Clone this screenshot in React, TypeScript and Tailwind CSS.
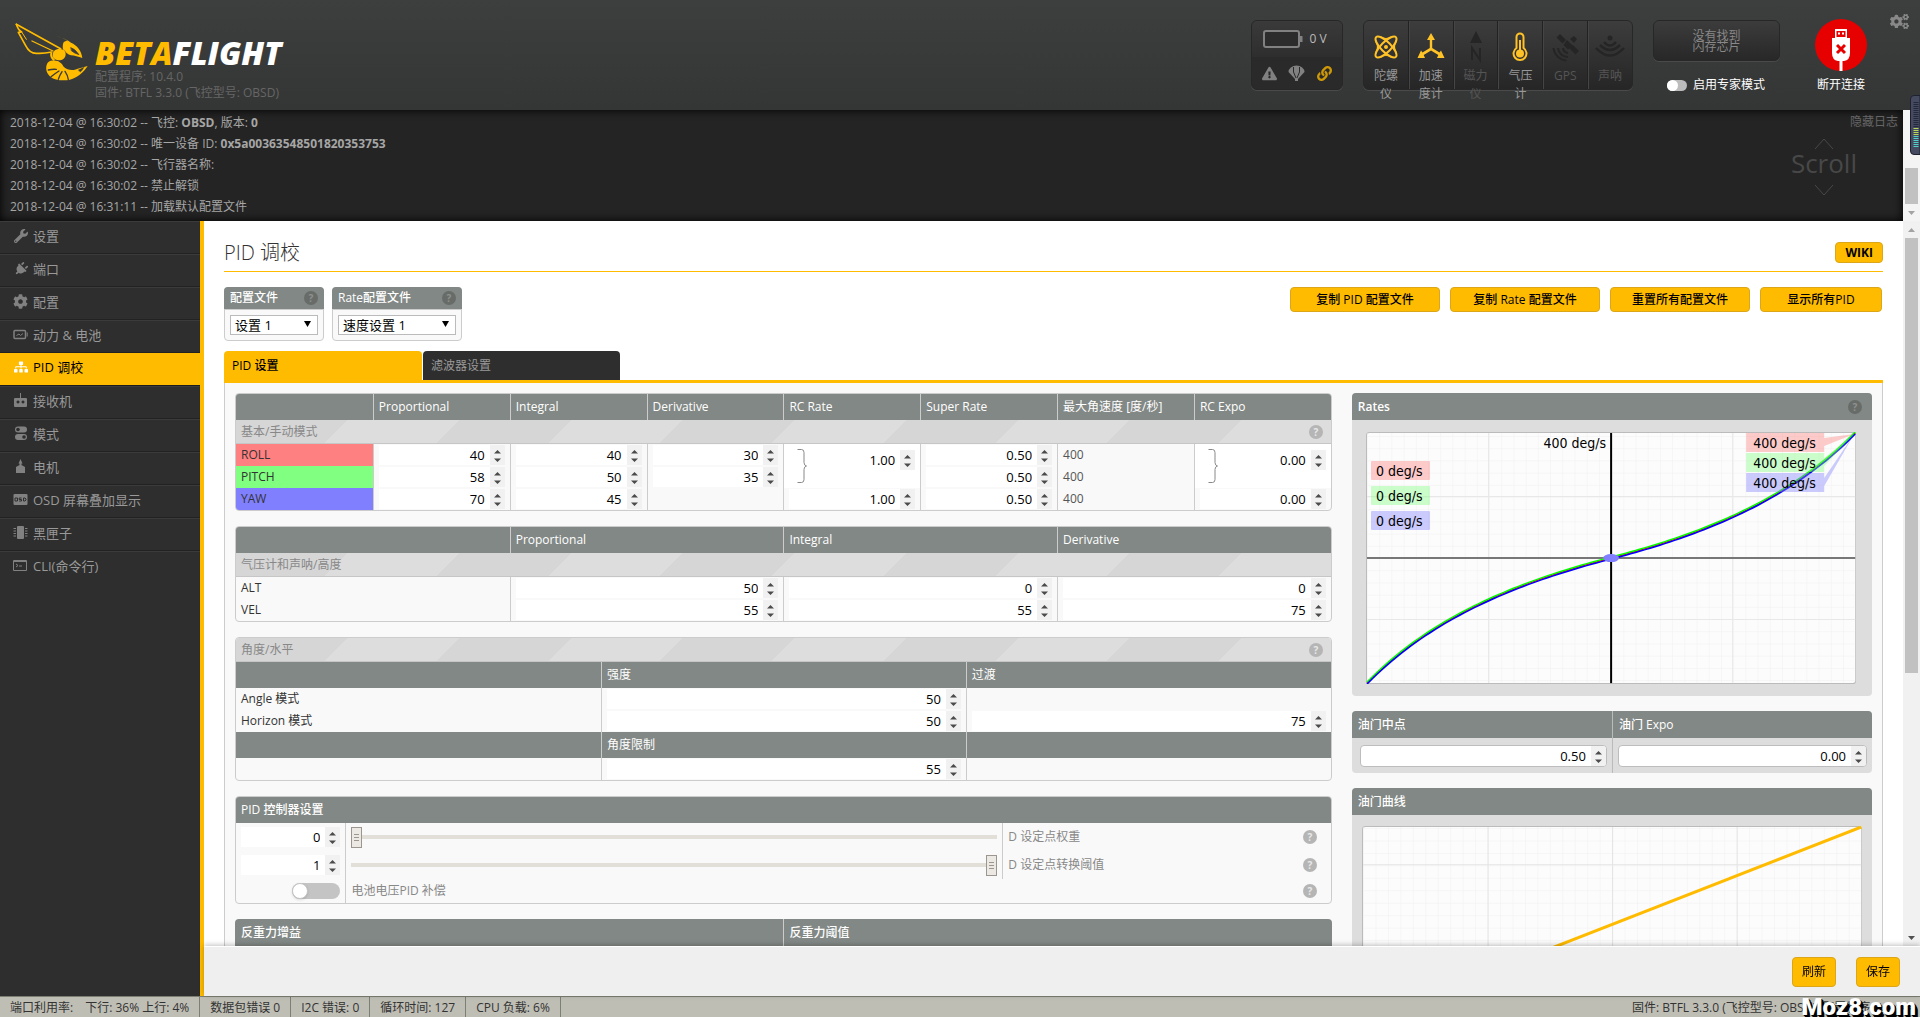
import type { ReactNode } from "react";
import { FaCog, FaCogs, FaExclamationTriangle, FaLink, FaPlug, FaSitemap, FaWrench } from "react-icons/fa";

type SpinnerProps = {
  label: string;
  value: string;
  framed?: boolean;
};

function Spinner({ label, value, framed = false }: SpinnerProps) {
  return (
    <span
      className={
        framed
          ? "flex h-[22px] w-full overflow-hidden rounded-sm border border-[#bdbdbd] bg-white"
          : "flex h-5 w-full bg-white"
      }
    >
      <input
        type="number"
        aria-label={label}
        defaultValue={value}
        step="any"
        className="min-w-0 flex-1 appearance-none bg-transparent pr-[5px] text-right text-[13px] leading-5 text-black outline-none [&::-webkit-inner-spin-button]:appearance-none"
      />
      <svg width="15" height="20" viewBox="0 0 15 20" className="shrink-0 bg-[#f1f1f1]" aria-hidden="true">
        <path d="M4 8.5 L7.5 5 L11 8.5Z M4 13.5 L7.5 17 L11 13.5Z" fill="#4b4b4b" />
      </svg>
    </span>
  );
}

function Help({ dark = false }: { dark?: boolean }) {
  return (
    <span
      className={
        dark
          ? "flex size-3.5 shrink-0 items-center justify-center rounded-full bg-[#686c69] text-[10px] font-bold text-[#8d918e]"
          : "flex size-3.5 shrink-0 items-center justify-center rounded-full bg-[#b5b5b5] text-[10px] font-bold text-[#e8e8e8]"
      }
    >
      ?
    </span>
  );
}

function Switch({ id, small = false }: { id: string; small?: boolean }) {
  return (
    <input
      id={id}
      type="checkbox"
      role="switch"
      className={
        small
          ? "h-[11px] w-5 appearance-none rounded-full bg-[#bcbcbc] before:block before:size-[11px] before:rounded-full before:bg-white"
          : "block h-4 w-12 appearance-none rounded-full bg-[#c4c4c4] before:block before:size-4 before:rounded-full before:border before:border-[#c4c4c4] before:bg-white before:shadow"
      }
    />
  );
}

function Box({ children }: { children: ReactNode }) {
  return <div className="mb-[15px] overflow-hidden rounded border border-[#ccc]">{children}</div>;
}

const tableClass = "w-full table-fixed border-separate border-spacing-0 text-left";
const stripes =
  "h-6 border-b border-[#c6c6c6] bg-[repeating-linear-gradient(135deg,#d6d6d6_0_79px,#dddddd_79px_158px)] px-[5px] font-normal text-[#888]";

function HeadRow({ titles }: { titles: string[] }) {
  return (
    <tr className="bg-[#828885] text-white">
      {titles.map((title, i) => (
        <th
          key={i}
          className={i === 0 ? "h-[26px] px-[5px] font-normal" : "h-[26px] border-l border-[#ccc] px-[5px] font-normal"}
        >
          {title}
        </th>
      ))}
    </tr>
  );
}

function StripeRow({ title, span, help = false }: { title: string; span: number; help?: boolean }) {
  return (
    <tr>
      <th colSpan={span} className={stripes}>
        <span className="flex items-center justify-between pr-[3px]">
          {title}
          {help && <Help />}
        </span>
      </th>
    </tr>
  );
}

const inputCell = "h-[22px] border-l border-[#ccc] px-[5px] py-0";

function ValueCell({ label, value }: { label: string; value: string | null }) {
  return <td className={inputCell}>{value !== null && <Spinner label={label} value={value} />}</td>;
}

function BracketCell({ label, value }: { label: string; value: string }) {
  return (
    <td rowSpan={2} className="border-l border-[#ccc] bg-white px-[5px] py-0">
      <div className="flex items-center pl-2">
        <svg width="10" height="34" viewBox="0 0 10 34" fill="none" stroke="#888" className="shrink-0" aria-hidden="true">
          <path d="M0.5 0.5h4q2.5 0 2.5 3v10q0 3 2.5 3.5q-2.5 0.5 -2.5 3.5v10q0 3 -2.5 3h-4" />
        </svg>
        <div className="min-w-0 flex-1 pb-3">
          <Spinner label={label} value={value} />
        </div>
      </div>
    </td>
  );
}

function Hornet() {
  return (
    <svg width="73" height="58" viewBox="46 69 219 174" aria-hidden="true">
      <g fill="none" stroke="#ffbb00" strokeLinejoin="round" strokeLinecap="round">
        <path d="M50 73 L183 146" strokeWidth="5" />
        <path d="M50 73 C54 86 58 92 66 96 L56 97 C62 108 70 122 78 137 C86 153 98 161 112 160 C128 161 142 159 156 156" strokeWidth="5" />
        <path d="M66 96 L80 118" strokeWidth="3" />
        <path d="M97 123 L160 153" strokeWidth="4" />
      </g>
      <g fill="#ffbb00">
        <path d="M168 108 C190 113 204 121 214 128 C232 136 246 152 248 174 C236 170 224 167 214 166 C204 162 198 158 196 152 C190 152 188 144 190 132 C192 124 198 122 204 124 C196 116 184 112 168 108Z" />
        <path d="M164 152 C170 146 184 146 192 150 C200 156 200 170 192 176 C182 184 166 182 160 172 C158 164 159 157 164 152Z" />
        <path d="M152 158 C150 168 153 176 162 183 L166 179 C158 172 156 166 158 157Z" />
        <path d="M160 182 C176 180 186 190 192 200 C204 212 222 212 234 206 L264 198 C252 216 234 234 208 240 C186 243 164 240 152 230 C140 220 136 204 143 190 C148 183 154 181 160 182Z" />
      </g>
      <g fill="none" stroke="#393b3a" strokeLinecap="round">
        <path d="M146 210 Q158 207 170 208" strokeWidth="4" />
        <path d="M154 230 Q164 222 178 213" strokeWidth="4" />
        <path d="M176 238 Q180 226 187 215" strokeWidth="4" />
        <path d="M206 239 Q204 225 196 214" strokeWidth="4" />
        <path d="M214 143 Q226 146 238 164 Q224 160 216 153 Z" fill="#393b3a" strokeWidth="2" />
        <path d="M236 210 L253 202 Q248 212 242 216Z" fill="#393b3a" strokeWidth="1" />
      </g>
    </svg>
  );
}

const sensors: { label: string; on: boolean; icon: ReactNode }[] = [
  {
    label: "陀螺仪",
    on: true,
    icon: (
      <g fill="none" stroke="currentColor" strokeWidth="2">
        <ellipse cx="15" cy="16" rx="14" ry="5" transform="rotate(45 15 16)" />
        <ellipse cx="15" cy="16" rx="14" ry="5" transform="rotate(-45 15 16)" />
        <circle cx="15" cy="16" r="2" fill="currentColor" stroke="none" />
        <path d="M10 6 Q15 9 20 6 M10 26 Q15 23 20 26 M5 11 Q8 16 5 21 M25 11 Q22 16 25 21" strokeWidth="1.2" />
      </g>
    ),
  },
  {
    label: "加速度计",
    on: true,
    icon: (
      <g fill="currentColor">
        <path d="M15 2 L19 9 H16.200 V17 L23.500 21.500 L25 19.500 L28.500 27 L21 27 L22.300 24 L15 19.500 L7.700 24 L9 27 L1.500 27 L5 19.500 L6.500 21.500 L13.800 17 V9 H11Z" />
      </g>
    ),
  },
  {
    label: "磁力仪",
    on: false,
    icon: (
      <g fill="none" stroke="currentColor" strokeWidth="2">
        <path d="M15 0 L21 12 H9Z" fill="currentColor" stroke="none" />
        <path d="M11 29 V17 L19 29 V17" />
      </g>
    ),
  },
  {
    label: "气压计",
    on: true,
    icon: (
      <g fill="none" stroke="currentColor" strokeWidth="2">
        <path d="M11.500 17 V6 a3.500 3.500 0 0 1 7 0 V17 a6.500 6.500 0 1 1 -7 0Z" />
        <circle cx="15" cy="22.500" r="4" fill="currentColor" stroke="none" />
        <path d="M15 21 V9" />
      </g>
    ),
  },
  {
    label: "GPS",
    on: false,
    icon: (
      <g fill="currentColor">
        <path d="M10 3 L16 9 L12.500 12.500 L6.500 6.500Z M23 14 L29 20 L25.500 23.500 L19.500 17.500Z M17 9 L23 15 L18 18.500 L13.500 14Z M20 8 L24 5 L27 8 L24 12Z" />
        <path d="M13 17 a6 6 0 0 0 5 5 M8 17 a10 10 0 0 0 10 9 M3.500 17 a14 14 0 0 0 13 12.500" fill="none" stroke="currentColor" strokeWidth="2" />
      </g>
    ),
  },
  {
    label: "声呐",
    on: false,
    icon: (
      <g fill="none" stroke="currentColor" strokeWidth="2.500">
        <circle cx="15" cy="7" r="2.500" fill="currentColor" stroke="none" />
        <path d="M9 11 Q15 18 21 11 M5 14 Q15 24 25 14 M1 17 Q15 32 29 17" />
      </g>
    ),
  },
];

function Header() {
  return (
    <header className="relative z-10 flex h-[110px] shrink-0 justify-between bg-linear-to-b from-[#3d3f3e] to-[#343635]">
      <div className="flex pl-[15px] pt-[23px]">
        <Hornet />
        <div className="pl-[7px] pt-3.5">
          <div className="text-[32px] leading-8 font-extrabold text-white italic">
            <span className="text-[#ffbb00]">BETA</span>FLIGHT
          </div>
          <p className="text-[#666]">
            配置程序: 10.4.0
            <br />
            固件: BTFL 3.3.0 (飞控型号: OBSD)
          </p>
        </div>
      </div>

      <div className="flex items-start pt-5">
        <div className="mr-5 h-[70px] w-[92px] overflow-hidden rounded-md border border-[#272727] bg-[#2a2a2a] shadow-[0_1px_0_#4a4a4a]">
          <div className="flex h-9 items-center justify-center gap-1.5 bg-linear-to-b from-[#3a3a3a] to-[#2e2e2e] pr-1 text-[#bbb]">
            <svg width="40" height="18" viewBox="0 0 40 18" aria-hidden="true">
              <rect x="1" y="1" width="35" height="16" rx="2" fill="#2c2c2c" stroke="#818181" strokeWidth="2" />
              <rect x="37" y="6" width="2.500" height="6" fill="#818181" />
            </svg>
            0 V
          </div>
          <div className="flex h-8 items-center justify-around px-1 text-[#818181]">
            <FaExclamationTriangle size={15} />
            <svg width="17" height="16" viewBox="0 0 17 16" fill="currentColor" aria-label="Failsafe">
              <path d="M0.500 7 A8 6.500 0 0 1 16.500 7 L10 14 V16 H7 V14Z" />
              <path d="M5.500 2 L5.500 7 L8 13 M11.500 2 L11.500 7 L9 13" stroke="#2a2a2a" fill="none" />
            </svg>
            <FaLink size={15} className="text-[#ce9806]" />
          </div>
        </div>

        <div className="mr-5 flex h-[70px] w-[270px] rounded-md border border-[#272727] bg-linear-to-b from-[#3d3d3d] to-[#262626] shadow-[0_1px_0_#4a4a4a]">
          {sensors.map((sensor, i) => (
            <div
              key={sensor.label}
              className={
                i === 0
                  ? "flex flex-1 flex-col items-center pt-2"
                  : "flex flex-1 flex-col items-center border-l border-[#222] pt-2 shadow-[inset_1px_0_0_#454545]"
              }
            >
              <svg
                width="30"
                height="38"
                viewBox="0 -2 30 38"
                className={sensor.on ? "shrink-0 text-[#ffc227]" : "shrink-0 text-[#252525]"}
                aria-hidden="true"
              >
                {sensor.icon}
              </svg>
              <div
                className={
                  sensor.on ? "max-w-7 text-center leading-[18px] text-[#999]" : "max-w-7 text-center leading-[18px] text-[#555]"
                }
              >
                {sensor.label}
              </div>
            </div>
          ))}
        </div>

        <div className="w-[127px]">
          <div className="flex h-[41px] items-center justify-center rounded-md border border-[#272727] bg-linear-to-b from-[#3c3c3c] to-[#282828] shadow-[0_1px_0_#4a4a4a]">
            <span className="w-12 leading-[11px] text-[#888]">没有找到闪存芯片</span>
          </div>
          <label htmlFor="expert" className="mt-4 flex items-center gap-1.5 pl-3.5 text-white">
            <Switch id="expert" small />
            启用专家模式
          </label>
        </div>

        <button type="button" className="ml-4 flex w-[90px] flex-col items-center gap-1.5 text-white">
          <svg width="52" height="52" viewBox="0 0 52 52" className="-mt-px" aria-hidden="true">
            <circle cx="26" cy="26" r="26" fill="#e60000" />
            <path d="M20 10h12v9h3v15q0 7 -6 8h-1.500v10h-3V42H23q-6 -1 -6 -8V19h3Z" fill="#fff" />
            <path d="M21.500 12h9v6h-9Z M23 13.500v2h2v-2Z M27 13.500v2h2v-2Z" fill="#e60000" fillRule="evenodd" />
            <path d="M22 26 L30 34 M30 26 L22 34" stroke="#e60000" strokeWidth="3" />
          </svg>
          断开连接
        </button>
        <FaCogs size={19} className="-mt-2 ml-1 mr-[11px] text-[#888]" />
      </div>

      <svg width="10" height="60" viewBox="0 0 10 60" className="absolute right-0 top-[95px]" aria-hidden="true">
        <path d="M10 0.500H4Q0.500 0.500 0.500 4V56Q0.500 59.500 4 59.500H10Z" fill="#454a60" stroke="#1d2130" />
        <path d="M6 7V33" stroke="#23283a" strokeWidth="5" strokeDasharray="1 1" />
        <path d="M6 33V41" stroke="#b6d957" strokeWidth="5" strokeDasharray="1 1" />
        <path d="M6 41V53" stroke="#4fd0c8" strokeWidth="5" strokeDasharray="1 1" />
      </svg>
    </header>
  );
}

const logLines: [string, ReactNode][] = [
  ["16:30:02", <>飞控: <b>OBSD</b>, 版本: <b>0</b></>],
  ["16:30:02", <>唯一设备 ID: <b>0x5a00363548501820353753</b></>],
  ["16:30:02", "飞行器名称:"],
  ["16:30:02", "禁止解锁"],
  ["16:31:11", "加载默认配置文件"],
];

function Log() {
  return (
    <section className="flex h-[111px] shrink-0">
      <div className="relative flex-1 bg-[#242424] shadow-[inset_0_0_10px_#000]">
        <div className="px-2.5 pt-0.5 leading-[21px] text-[#a6a6a6]">
          {logLines.map(([time, message], i) => (
            <p key={i}>
              2018-12-04 @ {time} -- {message}
            </p>
          ))}
        </div>
        <a href="#log" className="absolute right-[5px] top-1 text-[#666]">
          隐藏日志
        </a>
        <div className="absolute right-[46px] top-7 flex flex-col items-center text-[#484848]">
          <svg width="20" height="12" viewBox="0 0 20 12" fill="none" stroke="currentColor" aria-hidden="true">
            <path d="M1 11 L10 1 L19 11" />
          </svg>
          <span className="pb-2 text-[26px] leading-[26px]">Scroll</span>
          <svg width="20" height="12" viewBox="0 0 20 12" fill="none" stroke="currentColor" aria-hidden="true">
            <path d="M1 1 L10 11 L19 1" />
          </svg>
        </div>
      </div>
      <div className="flex w-[17px] flex-col items-center justify-end bg-[#f4f4f4]" aria-hidden="true">
        <div className="h-9 w-[13px] bg-[#c1c1c1]" />
        <svg width="17" height="17" viewBox="0 0 17 17">
          <path d="M5 7h7l-3.500 4Z" fill="#a3a3a3" />
        </svg>
      </div>
    </section>
  );
}

const navItems: { label: string; icon: ReactNode }[] = [
  { label: "设置", icon: <FaWrench size={14} /> },
  { label: "端口", icon: <FaPlug size={14} className="rotate-45" /> },
  { label: "配置", icon: <FaCog size={15} /> },
  {
    label: "动力 & 电池",
    icon: (
      <svg width="15" height="15" viewBox="0 0 15 15" fill="none" stroke="currentColor">
        <rect x="1" y="3.500" width="11.500" height="8" rx="1" strokeWidth="1.500" />
        <path d="M14.200 5.500v4M3.500 8.500l2.500-1.500 1.500 1.500 2.500-2" />
      </svg>
    ),
  },
  { label: "PID 调校", icon: <FaSitemap size={14} /> },
  {
    label: "接收机",
    icon: (
      <svg width="15" height="15" viewBox="0 0 15 15" fill="currentColor">
        <path d="M7 0h1v5h5q1 0 1 1v7q0 1 -1 1H2q-1 0 -1 -1V6q0-1 1-1h5Z" />
        <path d="M5 7.500a1.500 1.500 0 1 0 .01 0M10 7.500a1.500 1.500 0 1 0 .01 0" fill="#2e2e2e" />
      </svg>
    ),
  },
  {
    label: "模式",
    icon: (
      <svg width="15" height="15" viewBox="0 0 15 15" fill="currentColor">
        <rect x="2" y="0.500" width="12" height="6" rx="3" />
        <rect x="2" y="8" width="12" height="6" rx="3" />
        <circle cx="5" cy="3.500" r="1.800" fill="#2e2e2e" />
        <circle cx="11" cy="11" r="1.800" fill="#2e2e2e" />
      </svg>
    ),
  },
  {
    label: "电机",
    icon: (
      <svg width="15" height="15" viewBox="0 0 15 15" fill="currentColor">
        <path d="M7.500 0 L9.500 4.500 H8.500 V6 L12 8 V14 H3 V8 L6.500 6 V4.500 H5.500Z" />
      </svg>
    ),
  },
  {
    label: "OSD 屏幕叠加显示",
    icon: (
      <svg width="15" height="15" viewBox="0 0 15 15">
        <rect x="0.500" y="2" width="14" height="11" rx="1" fill="currentColor" />
        <path d="M2 6h2.500v3H2Z M8.500 6H6.200v1.500h2.300v1.500H6.200 M10.500 6h1.500l1 1v1l-1 1h-1.500Z" fill="none" stroke="#2e2e2e" />
      </svg>
    ),
  },
  {
    label: "黑匣子",
    icon: (
      <svg width="15" height="15" viewBox="0 0 15 15" fill="currentColor">
        <rect x="4" y="1" width="7" height="13" rx="1" />
        <path d="M0.500 3.500h2.500M0.500 6h2.500M0.500 8.500h2.500M0.500 11h2.500M12 3.500h2.500M12 6h2.500M12 8.500h2.500M12 11h2.500" stroke="currentColor" />
      </svg>
    ),
  },
  {
    label: "CLI(命令行)",
    icon: (
      <svg width="15" height="15" viewBox="0 0 15 15" fill="none" stroke="currentColor">
        <path d="M0.500 2.500h13v10h-13Z M0.500 3.500h13M3 6l2 1.500L3 9M6 8h3" />
      </svg>
    ),
  },
];

function Sidebar() {
  return (
    <nav className="w-[204px] shrink-0 border-r-4 border-[#ffbb00] bg-[#2e2e2e] text-[13px]">
      {navItems.map((item) => (
        <a
          key={item.label}
          href="#tab"
          className={
            item.label === "PID 调校"
              ? "flex h-[33px] items-center gap-[5px] border-b border-[#1c1c1c] bg-[#ffbb00] pb-1 pl-[13px] text-black"
              : "flex h-[33px] items-center gap-[5px] border-b border-t border-t-[#3b3b3b] border-b-[#222] pb-1 pl-[13px] text-[#999] last:border-b-transparent"
          }
        >
          <span className={item.label === "PID 调校" ? "flex w-[15px] justify-center text-white" : "flex w-[15px] justify-center text-[#818181]"}>
            {item.icon}
          </span>
          {item.label}
        </a>
      ))}
    </nav>
  );
}

function ProfileSelect({ id, title, option }: { id: string; title: string; option: string }) {
  return (
    <div className="rounded border border-[#ccc] bg-[#f9f9f9]">
      <div className="-mx-px -mt-px flex h-[23px] items-center justify-between rounded-t border-b border-[#ccc] bg-[#828885] px-1.5 font-medium text-white">
        <label htmlFor={id}>{title}</label>
        <Help dark />
      </div>
      <div className="relative p-[5px]">
        <select
          id={id}
          className="block h-5 w-full appearance-none border border-[#bbb] bg-white pl-1 text-[13px] leading-[18px] text-black"
        >
          <option>{option}</option>
        </select>
        <svg width="7" height="6" viewBox="0 0 7 6" className="absolute right-3 top-[11px]" aria-hidden="true">
          <path d="M0 0h7L3.500 6Z" />
        </svg>
      </div>
    </div>
  );
}

const buttonClass = "rounded border border-[#dba718] bg-[#ffbb00] text-center text-black";

const mainRows = [
  { name: "ROLL", className: "bg-[#ff8080]", p: "40", i: "40", d: "30", rate: "1.00", superRate: "0.50", expo: "0.00" },
  { name: "PITCH", className: "bg-[#80ff80]", p: "58", i: "50", d: "35", rate: null, superRate: "0.50", expo: null },
  { name: "YAW", className: "bg-[#8080ff]", p: "70", i: "45", d: null, rate: "1.00", superRate: "0.50", expo: "0.00" },
];

function PidTables() {
  return (
    <div className="w-[67%]">
      <Box>
        <table className={tableClass}>
          <thead>
            <HeadRow
              titles={["", "Proportional", "Integral", "Derivative", "RC Rate", "Super Rate", "最大角速度 [度/秒]", "RC Expo"]}
            />
          </thead>
          <tbody>
            <StripeRow title="基本/手动模式" span={8} help />
            {mainRows.map((row) => (
              <tr key={row.name}>
                <td className={`px-[5px] text-[#333] ${row.className}`}>{row.name}</td>
                <ValueCell label={`${row.name} P`} value={row.p} />
                <ValueCell label={`${row.name} I`} value={row.i} />
                <ValueCell label={`${row.name} D`} value={row.d} />
                {row.name === "ROLL" && <BracketCell label="RC Rate" value="1.00" />}
                {row.name === "YAW" && <ValueCell label="YAW RC Rate" value={row.rate} />}
                <ValueCell label={`${row.name} Super Rate`} value={row.superRate} />
                <td className="border-l border-[#ccc] px-[5px] text-[#555]">400</td>
                {row.name === "ROLL" && <BracketCell label="RC Expo" value="0.00" />}
                {row.name === "YAW" && <ValueCell label="YAW RC Expo" value={row.expo} />}
              </tr>
            ))}
          </tbody>
        </table>
      </Box>

      <Box>
        <table className={tableClass}>
          <thead>
            <HeadRow titles={["", "Proportional", "Integral", "Derivative"]} />
          </thead>
          <tbody>
            <StripeRow title="气压计和声呐/高度" span={4} />
            <tr>
              <td className="px-[5px]">ALT</td>
              <ValueCell label="ALT P" value="50" />
              <ValueCell label="ALT I" value="0" />
              <ValueCell label="ALT D" value="0" />
            </tr>
            <tr>
              <td className="px-[5px]">VEL</td>
              <ValueCell label="VEL P" value="55" />
              <ValueCell label="VEL I" value="55" />
              <ValueCell label="VEL D" value="75" />
            </tr>
          </tbody>
        </table>
      </Box>

      <Box>
        <table className={tableClass}>
          <tbody>
            <StripeRow title="角度/水平" span={3} help />
            <HeadRow titles={["", "强度", "过渡"]} />
            <tr>
              <td className="px-[5px]">Angle 模式</td>
              <ValueCell label="Angle 强度" value="50" />
              <ValueCell label="Angle 过渡" value={null} />
            </tr>
            <tr>
              <td className="px-[5px]">Horizon 模式</td>
              <ValueCell label="Horizon 强度" value="50" />
              <ValueCell label="Horizon 过渡" value="75" />
            </tr>
            <HeadRow titles={["", "角度限制", ""]} />
            <tr>
              <td />
              <ValueCell label="角度限制" value="55" />
              <ValueCell label="" value={null} />
            </tr>
          </tbody>
        </table>
      </Box>

      <Box>
        <table className={tableClass}>
          <colgroup>
            <col className="w-[10%]" />
            <col className="w-[60%]" />
            <col className="w-[30%]" />
          </colgroup>
          <thead>
            <tr className="bg-[#828885] text-white">
              <th colSpan={3} className="h-[26px] px-[5px] font-medium">
                PID 控制器设置
              </th>
            </tr>
          </thead>
          <tbody className="text-[#888]">
            <SliderRow label="D 设定点权重" value="0" />
            <SliderRow label="D 设定点转换阈值" value="1" />
            <tr>
              <td className="h-6 pr-[5px]">
                <div className="flex justify-end">
                  <Switch id="vbat" />
                </div>
              </td>
              <td className="border-l border-[#ccc] px-[5px]">
                <label htmlFor="vbat">电池电压PID 补偿</label>
              </td>
              <td className="pr-3.5">
                <div className="flex justify-end">
                  <Help />
                </div>
              </td>
            </tr>
          </tbody>
        </table>
      </Box>

      <div className="grid h-16 grid-cols-2 rounded-t bg-[#828885] font-medium text-white">
        <div className="px-1.5 pt-1.5">反重力增益</div>
        <div className="border-l border-[#ccc] px-[5px] pt-1.5">反重力阈值</div>
      </div>
    </div>
  );
}

function SliderRow({ label, value }: { label: string; value: string }) {
  return (
    <tr>
      <td className="h-7 px-[5px] py-0">
        <Spinner label={label} value={value} />
      </td>
      <td className="border-l border-[#ccc] px-[5px] py-0">
        <input
          type="range"
          min={0}
          max={1}
          step={0.01}
          defaultValue={value}
          aria-label={label}
          className="block h-[21px] w-full appearance-none bg-transparent [&::-webkit-slider-runnable-track]:h-1 [&::-webkit-slider-runnable-track]:bg-[#e2ded8] [&::-webkit-slider-thumb]:-mt-2 [&::-webkit-slider-thumb]:h-[21px] [&::-webkit-slider-thumb]:w-[11px] [&::-webkit-slider-thumb]:appearance-none [&::-webkit-slider-thumb]:border [&::-webkit-slider-thumb]:border-[#9d968e] [&::-webkit-slider-thumb]:bg-[#ece8e3] [&::-webkit-slider-thumb]:bg-[repeating-linear-gradient(to_bottom,#9d968e_0_1px,transparent_1px_3px)] [&::-webkit-slider-thumb]:bg-[length:5px_7px] [&::-webkit-slider-thumb]:bg-center [&::-webkit-slider-thumb]:bg-no-repeat"
        />
      </td>
      <td className="border-l border-[#ccc] py-0 pl-[5px] pr-3.5">
        <div className="flex items-center justify-between">
          {label}
          <Help />
        </div>
      </td>
    </tr>
  );
}

// rate = 200 * x / (1 - 0.5 * |x|), full stick is 400 deg/s
function curvePoints(offset: number) {
  const points: string[] = [];
  for (let i = -50; i <= 50; i++) {
    const x = i / 50;
    const y = (0.5 * x) / (1 - 0.5 * Math.abs(x));
    points.push(`${245 + x * 244},${126 - y * 125 + offset}`);
  }
  return points.join(" ");
}

const centerLabels = [
  { y: 29, fill: "#ff8080" },
  { y: 54, fill: "#80ff80" },
  { y: 79, fill: "#8080ff" },
];

const maxLabels = [
  { y: 1, fill: "#ff8080" },
  { y: 21, fill: "#80ff80" },
  { y: 41, fill: "#8080ff" },
];

function RatesPlot() {
  return (
    <svg viewBox="0 0 490 252" className="w-full" aria-label="Rates" fontFamily="DejaVu Sans Condensed, DejaVu Sans, sans-serif" fontSize="14">
      <defs>
        <pattern id="minor" width="12.200" height="12.200" patternUnits="userSpaceOnUse" x="1" y="4">
          <path d="M0 0H12.200M0 0V12.200" stroke="#f0f0f0" fill="none" />
        </pattern>
      </defs>
      <rect x="0.500" y="0.500" width="489" height="251" rx="3" fill="#fcfcfc" stroke="#bbb" />
      <rect x="1" y="1" width="488" height="250" fill="url(#minor)" />
      <path d="M122.500 1V251M366.500 1V251M1 64.500H489M1 187.500H489" stroke="#e8e8e8" />
      <path d="M1 126H489" stroke="#777" strokeWidth="2" />
      <path d="M245 1V251" stroke="#000" strokeWidth="2" />
      <g fill="none" strokeWidth="1.500">
        <polyline points={curvePoints(0)} stroke="#f00" />
        <polyline points={curvePoints(-1)} stroke="#0f0" />
        <polyline points={curvePoints(1)} stroke="#00f" />
      </g>
      <ellipse cx="245" cy="126" rx="8" ry="4" fill="#8080ff" />
      {maxLabels.map((label) => (
        <g key={label.fill}>
          <path
            d={`M380 ${label.y}H458V${label.y + 5}L488 2L458 ${label.y + 13}V${label.y + 19}H380Z`}
            fill={label.fill}
            fillOpacity="0.400"
          />
          <text x="387" y={label.y + 15}>400 deg/s</text>
        </g>
      ))}
      {centerLabels.map((label) => (
        <g key={label.fill}>
          <rect x="5" y={label.y} width="59" height="19" rx="1" fill={label.fill} fillOpacity="0.400" />
          <text x="10" y={label.y + 15}>0 deg/s</text>
        </g>
      ))}
      <text x="240" y="16" textAnchor="end">400 deg/s</text>
    </svg>
  );
}

function ThrottlePlot() {
  return (
    <svg viewBox="0 0 498 196" className="w-full" aria-label="油门曲线">
      <defs>
        <pattern id="throttle-minor" width="12.400" height="12.400" patternUnits="userSpaceOnUse" x="1" y="2">
          <path d="M0 0H12.400M0 0V12.400" stroke="#f0f0f0" fill="none" />
        </pattern>
      </defs>
      <rect x="0.500" y="0.500" width="497" height="195" rx="3" fill="#fcfcfc" stroke="#bbb" />
      <rect x="1" y="1" width="496" height="194" fill="url(#throttle-minor)" />
      <path d="M125.500 1V195M249.500 1V195M373.500 1V195M1 38.500H497M1 162.500H497" stroke="#e4e4e4" />
      <path d="M1 195L497 1" stroke="#ffbb00" strokeWidth="3" />
    </svg>
  );
}

function RatesColumn() {
  const head = "flex h-[27px] items-center justify-between rounded-t bg-[#828885] pl-1.5 pr-2.5 text-white";
  return (
    <div className="flex-1 pl-5">
      <div className="mb-[15px] rounded bg-[#ddd]">
        <h3 className={`${head} font-semibold`}>
          Rates
          <Help dark />
        </h3>
        <div className="flex py-3 pl-3.5 pr-4">
          <RatesPlot />
        </div>
      </div>
      <table className="mb-[15px] w-full table-fixed border-separate border-spacing-0 overflow-hidden rounded bg-[#ddd] text-left">
        <thead>
          <tr className="bg-[#828885] text-white">
            <th className="h-[27px] px-1.5 font-medium">油门中点</th>
            <th className="h-[27px] border-l border-[#bbb] px-1.5 font-medium">油门 Expo</th>
          </tr>
        </thead>
        <tbody>
          <tr>
            <td className="h-[35px] py-0 pl-2 pr-[5px]">
              <Spinner label="油门中点" value="0.50" framed />
            </td>
            <td className="border-l border-[#bbb] px-[5px] py-0">
              <Spinner label="油门 Expo" value="0.00" framed />
            </td>
          </tr>
        </tbody>
      </table>
      <div className="rounded bg-[#ddd]">
        <h3 className={`${head} font-medium`}>油门曲线</h3>
        <div className="flex px-2.5 py-[11px]">
          <ThrottlePlot />
        </div>
      </div>
    </div>
  );
}

function Content() {
  return (
    <main className="min-h-0 flex-1 overflow-y-auto bg-white px-5 [scrollbar-width:none]">
      <div className="flex h-[51px] items-center justify-between border-b border-[#ffbb00] pt-3">
        <h1 className="pt-0.5 text-[20px] font-light text-[#333]">PID 调校</h1>
        <a href="#wiki" className={`${buttonClass} px-[9px] leading-[19px] font-bold`}>
          WIKI
        </a>
      </div>

      <div className="mt-[15px] flex items-start justify-between">
        <div className="flex gap-2">
          <div className="w-[100px]">
            <ProfileSelect id="profile" title="配置文件" option="设置 1" />
          </div>
          <div className="w-[130px]">
            <ProfileSelect id="rate-profile" title="Rate配置文件" option="速度设置 1" />
          </div>
        </div>
        <div className="flex gap-2.5 pr-px font-medium">
          <button type="button" className={`${buttonClass} h-[25px] w-[150px]`}>复制 PID 配置文件</button>
          <button type="button" className={`${buttonClass} h-[25px] w-[150px]`}>复制 Rate 配置文件</button>
          <button type="button" className={`${buttonClass} h-[25px] w-[140px]`}>重置所有配置文件</button>
          <button type="button" className={`${buttonClass} h-[25px] w-[122px]`}>显示所有PID</button>
        </div>
      </div>

      <div className="mt-2.5 flex h-8 gap-px border-b-[3px] border-[#ffbb00]" role="tablist">
        <button type="button" role="tab" aria-selected="true" className="w-[198px] rounded-t bg-[#ffbb00] px-2 text-left font-medium text-black">
          PID 设置
        </button>
        <button type="button" role="tab" aria-selected="false" className="w-[197px] rounded-t bg-[#2e2e2e] px-2 text-left text-[#999]">
          滤波器设置
        </button>
      </div>

      <div className="flex border-x border-[#ccc] bg-[#f9f9f9] p-2.5">
        <PidTables />
        <RatesColumn />
      </div>
    </main>
  );
}

function StatusBar() {
  const cell = "border-r border-[#7d7f74] px-2.5";
  return (
    <footer className="relative flex h-[21px] shrink-0 justify-between border-t border-[#7d7f74] bg-[#bfbeb5] leading-[22px] text-[#333]">
      <div className="flex">
        <span className={`${cell} flex gap-3`}>
          <span>端口利用率:</span>
          <span>下行: 36% 上行: 4%</span>
        </span>
        <span className={cell}>数据包错误 0</span>
        <span className={cell}>I2C 错误: 0</span>
        <span className={cell}>循环时间: 127</span>
        <span className={cell}>CPU 负载: 6%</span>
      </div>
      <span className="w-[288px] whitespace-nowrap">固件: BTFL 3.3.0 (飞控型号: OBSD), 配置程序: 10.4.0</span>
      <span className="absolute right-1 top-0 font-['Roboto'] text-2xl leading-5 font-black text-white [text-shadow:1px_1px_0_#000,2px_2px_0_#000,3px_4px_0_#000]">
        Moz8.com
      </span>
    </footer>
  );
}

export default function App() {
  return (
    <div className="flex h-screen flex-col overflow-hidden bg-[#2e2e2e] font-['Open_Sans','Noto_Sans_CJK_SC',sans-serif] text-[12px] leading-4 text-[#333]">
      <Header />
      <Log />
      <div className="flex min-h-0 flex-1">
        <Sidebar />
        <div className="flex min-w-0 flex-1 flex-col">
          <div className="flex min-h-0 flex-1">
            <Content />
            <div className="flex w-[17px] shrink-0 flex-col items-center bg-[#f1f1f1]" aria-hidden="true">
              <svg width="17" height="17" viewBox="0 0 17 17">
                <path d="M5 11h7l-3.500-4Z" fill="#a3a3a3" />
              </svg>
              <div className="h-3/5 w-[13px] bg-[#c1c1c1]" />
              <svg width="17" height="17" viewBox="0 0 17 17" className="mt-auto">
                <path d="M5 7h7l-3.500 4Z" fill="#505050" />
              </svg>
            </div>
          </div>
          <div className="z-10 flex h-[50px] shrink-0 items-center justify-end gap-5 border-t border-white bg-[#efefef] pr-5 pt-1 pb-1 shadow-[0_-1px_5px_rgba(0,0,0,0.25)]">
            <button type="button" className={`${buttonClass} h-[30px] w-11`}>刷新</button>
            <button type="button" className={`${buttonClass} h-[30px] w-11`}>保存</button>
          </div>
        </div>
      </div>
      <StatusBar />
    </div>
  );
}
